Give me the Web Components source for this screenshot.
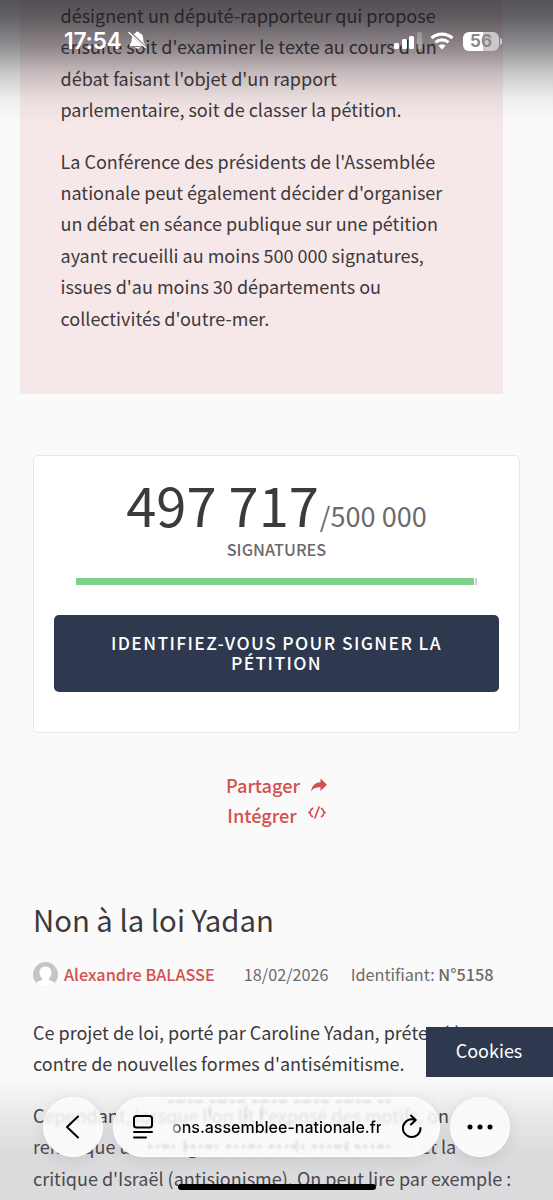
<!DOCTYPE html>
<html lang="fr">
<head>
<meta charset="utf-8">
<title>Non à la loi Yadan</title>
<style>
	html, body {
		margin: 0;
		height: 1200px;
		overflow: hidden;
	}
	body {
		position: relative;
		width: 553px;
		background: #fafafa;
		color: #3d393c;
		font: 18px/31.4px "Noto Sans CJK SC", "Noto Sans", sans-serif;
		font-kerning: normal;
	}
	p {
		margin: 0 0 20px;
		white-space: nowrap;
	}
</style>
</head>
<body>
<petition-notice>
	<p>désignent un député-rapporteur qui propose<br>ensuite soit d'examiner le texte au cours d'un<br>débat faisant l'objet d'un rapport<br>parlementaire, soit de classer la pétition.</p>
	<p>La Conférence des présidents de l'Assemblée<br>nationale peut également décider d'organiser<br>un débat en séance publique sur une pétition<br>ayant recueilli au moins 500 000 signatures,<br>issues d'au moins 30 départements ou<br>collectivités d'outre-mer.</p>
</petition-notice>

<signature-card count="497 717" goal="500 000" percent="99.3">Identifiez-vous pour signer la pétition</signature-card>

<share-links></share-links>

<petition-article author="Alexandre BALASSE" date="18/02/2026" number="N°5158">
	<span slot="title">Non à la loi Yadan</span>
	<p>Ce projet de loi, porté par Caroline Yadan, prétend lutter<br>contre de nouvelles formes d'antisémitisme.</p>
	<p>Cependant, lorsque l'on lit l'exposé des motifs, on<br>remarque un amalgame entre l'antisémitisme et la<br>critique d'Israël (antisionisme). On peut lire par exemple :</p>
</petition-article>

<cookie-button>Cookies</cookie-button>
<status-bar time="17:54" battery="56"></status-bar>
<browser-bar>ons.assemblee-nationale.fr</browser-bar>

<script>
class PetitionNotice extends HTMLElement {
	constructor() {
		super();
		this.attachShadow({mode: 'open'});
		this.shadowRoot.innerHTML = `
			<style>
				:host {
					display: block;
					box-sizing: border-box;
					width: 483px;
					height: 394px;
					margin-left: 20px;
					padding: 0 40px 40px 40.5px;
					background: #f6e8e8;
				}
			</style>
			<slot></slot>
		`;
	}
}

class SignatureCard extends HTMLElement {
	constructor() {
		super();
		this.attachShadow({mode: 'open'});
	}

	connectedCallback() {
		this.render();
	}

	render() {
		const count = this.getAttribute('count') || '0';
		const goal = this.getAttribute('goal') || '0';
		const percent = parseFloat(this.getAttribute('percent')) || 0;

		this.shadowRoot.innerHTML = `
			<style>
				:host {
					display: block;
					box-sizing: border-box;
					width: 487px;
					height: 278px;
					margin: 61px 0 0 33px;
					padding: 18px 20px 0;
					background: #fff;
					border: 1px solid #e8e8e8;
					border-radius: 5px;
					text-align: center;
				}
				.total {
					display: flex;
					justify-content: center;
					align-items: baseline;
					height: 64px;
					line-height: 60px;
					white-space: nowrap;
				}
				.count {
					font-size: 54.2px;
				}
				.goal {
					margin-left: 1px;
					font-size: 27.1px;
					color: #6d696c;
				}
				.label {
					height: 22px;
					font-size: 16.3px;
					font-weight: 500;
					line-height: 22px;
					color: #6d696c;
				}
				.progress {
					display: flex;
					gap: 1px;
					height: 7px;
					margin: 18px 22px 30px;
				}
				.done {
					width: ${percent}%;
					background: #7bd389;
				}
				.rest {
					flex: 1;
					background: #d0d0d0;
				}
				button {
					display: block;
					width: 100%;
					height: 77px;
					padding: 0 40px 2px;
					border: none;
					border-radius: 5px;
					background: #2e384f;
					color: #fff;
					font: 500 17.5px/20px "Noto Sans CJK SC", "Noto Sans", sans-serif;
					letter-spacing: 1.37px;
					text-transform: uppercase;
				}
			</style>
			<div class="total"><span class="count">${count}</span><span class="goal">/${goal}</span></div>
			<div class="label">SIGNATURES</div>
			<div class="progress"><div class="done"></div><div class="rest"></div></div>
			<button><slot></slot></button>
		`;
	}
}

class ShareLinks extends HTMLElement {
	constructor() {
		super();
		this.attachShadow({mode: 'open'});
		this.shadowRoot.innerHTML = `
			<style>
				:host {
					display: flex;
					flex-direction: column;
					align-items: center;
					margin-top: 37px;
					color: #d4504f;
					font-size: 18.2px;
					font-weight: 500;
					line-height: 30px;
				}
				a {
					display: flex;
					align-items: center;
					gap: 11px;
					height: 30px;
				}
				svg {
					display: block;
				}
				.embed {
					margin-bottom: 5px;
				}
			</style>
			<a>Partager
				<svg width="16" height="14" viewBox="0 0 16 14"><path fill="currentColor" d="M9.500 0.500v3.700C4 4.400 1 7.400 0 13.500c2-3.200 5-4.400 9.500-4.200v3.700L16 6.800z"/></svg>
			</a>
			<a>Intégrer
				<svg class="embed" width="18" height="14" viewBox="0 0 18 14" fill="none" stroke="currentColor" stroke-width="1.700"><path d="M5 2L3.200 3.500Q2.600 4.200 2.600 5Q2.600 6 1.200 6.500Q2.600 7 2.600 8.200Q2.600 9 3.200 9.600L5 11M13 2l1.800 1.500Q15.400 4.200 15.400 5Q15.400 6 16.800 6.500Q15.400 7 15.400 8.200Q15.400 9 14.800 9.600L13 11M11.300.5L6.700 12.500"/></svg>
			</a>
		`;
	}
}

class PetitionArticle extends HTMLElement {
	constructor() {
		super();
		this.attachShadow({mode: 'open'});
	}

	connectedCallback() {
		this.render();
	}

	render() {
		this.shadowRoot.innerHTML = `
			<style>
				:host {
					display: block;
					margin: 69px 0 0 33px;
				}
				h1 {
					margin: 0;
					font-size: 29.3px;
					font-weight: 400;
					line-height: 40px;
				}
				.meta {
					display: flex;
					align-items: center;
					height: 30px;
					margin: 20px 0 28px;
					font-size: 16.25px;
					line-height: 30px;
					color: #6d696c;
					white-space: nowrap;
				}
				.author {
					margin: 0 29px 0 6px;
					color: #d4504f;
					font-weight: 500;
				}
				.date {
					margin-right: 22px;
				}
				b {
					font-weight: 500;
				}
			</style>
			<h1><slot name="title"></slot></h1>
			<div class="meta">
				<svg width="25" height="25" viewBox="0 0 25 25">
					<clipPath id="round"><circle cx="12.500" cy="12.500" r="12.500"/></clipPath>
					<g clip-path="url(#round)">
						<rect width="25" height="25" fill="#c5c5c5"/>
						<path fill="#fff" d="M12.500 4.500c3.600 0 6 2.500 6 6 0 2.500-1 4.500-2.500 5.800v1.900c3 .6 5.500 1.700 6.500 3.800v4h-20v-4c1-2.100 3.500-3.200 6.500-3.800v-1.900c-1.500-1.300-2.500-3.300-2.500-5.800 0-3.500 2.400-6 6-6z"/>
					</g>
				</svg>
				<span class="author">${this.getAttribute('author')}</span>
				<span class="date">${this.getAttribute('date')}</span>
				<span>Identifiant: <b>${this.getAttribute('number')}</b></span>
			</div>
			<slot></slot>
		`;
	}
}

class CookieButton extends HTMLElement {
	constructor() {
		super();
		this.attachShadow({mode: 'open'});
		this.shadowRoot.innerHTML = `
			<style>
				:host {
					position: absolute;
					right: 0;
					top: 1027px;
					z-index: 2;
					display: flex;
					justify-content: center;
					align-items: center;
					box-sizing: border-box;
					width: 127px;
					height: 50px;
					padding: 0 1px 2px 0;
					background: #2e384f;
					color: #fff;
				}
			</style>
			<slot></slot>
		`;
	}
}

class StatusBar extends HTMLElement {
	constructor() {
		super();
		this.attachShadow({mode: 'open'});
	}

	connectedCallback() {
		this.render();
	}

	render() {
		this.shadowRoot.innerHTML = `
			<style>
				:host {
					position: absolute;
					inset: 0 0 auto;
					z-index: 3;
					display: flex;
					justify-content: space-between;
					box-sizing: border-box;
					height: 124px;
					padding: 29px 51px 0 64px;
					background: linear-gradient(rgba(28, 26, 33, .74), rgba(28, 26, 33, .68) 18px, rgba(28, 26, 33, .49) 45px, rgba(28, 26, 33, .22) 73px, rgba(28, 26, 33, .05) 100px, rgba(28, 26, 33, 0));
					color: #fff;
					font-family: Inter, sans-serif;
					line-height: 24px;
				}
				.side {
					display: flex;
					align-items: center;
					height: 24px;
				}
				.time {
					font-size: 22.8px;
					font-weight: 600;
					letter-spacing: -.25px;
					margin-right: 6px;
				}
				.bell {
					margin-bottom: 2px;
				}
				.wifi {
					margin: 0 9px 0 8px;
				}
				.battery {
					width: 36px;
					height: 19px;
					border-radius: 6px;
					background: linear-gradient(90deg, #fff 56%, #cbc7ca 56%);
					color: #8b878b;
					font-size: 17px;
					font-weight: 700;
					line-height: 19px;
					text-align: center;
				}
				.cap {
					width: 2px;
					height: 7px;
					margin-left: 1px;
					border-radius: 0 2px 2px 0;
					background: #cbc7ca;
				}
			</style>
			<div class="side">
				<span class="time">${this.getAttribute('time')}</span>
				<svg class="bell" width="19" height="20" viewBox="0 0 20 20">
					<path fill="#fff" d="M10 1c1.200 0 1.900.8 2 1.700 2.600.8 4 3 4 5.800 0 3.600.8 4.500 2 6 .7.900.3 1.700-.7 1.700H2.700c-1 0-1.400-.8-.7-1.700 1.200-1.500 2-2.400 2-6 0-2.800 1.400-5 4-5.800.1-.9.8-1.700 2-1.700zM7.500 17h5c-.3 1.300-1.200 2-2.500 2s-2.200-.7-2.500-2z"/>
					<path stroke="#7d777c" stroke-width="2.600" d="M2 2l17 16"/>
					<path stroke="#fff" stroke-width="1.400" stroke-linecap="round" d="M1 2l17.500 16"/>
				</svg>
			</div>
			<div class="side">
				<svg width="28" height="18" viewBox="0 0 28 18" fill="#fff">
					<rect y="11" width="5" height="6" rx="1.500"/>
					<rect x="8" y="7" width="5" height="10" rx="1.500"/>
					<rect x="15" y="4" width="5" height="13" rx="1.500"/>
					<rect x="23" y="0" width="5" height="17" rx="1.500" opacity=".25"/>
				</svg>
				<svg class="wifi" width="24" height="18" viewBox="0 0 24 18" fill="none" stroke="#fff" stroke-width="3.200">
					<path d="M1.500 6.200a15.300 15.300 0 0 1 21 0M5.500 10.400a9.500 9.500 0 0 1 13 0"/>
					<path fill="#fff" stroke="none" d="M12 17.500l-3.700-3.800a5.300 5.300 0 0 1 7.400 0z"/>
				</svg>
				<div class="battery">${this.getAttribute('battery')}</div>
				<div class="cap"></div>
			</div>
		`;
	}
}

class BrowserBar extends HTMLElement {
	constructor() {
		super();
		this.attachShadow({mode: 'open'});
		this.shadowRoot.innerHTML = `
			<style>
				:host {
					position: absolute;
					inset: auto 0 0;
					z-index: 1;
					display: flex;
					gap: 10px;
					box-sizing: border-box;
					height: 125px;
					padding: 22px 43px 0;
					background: linear-gradient(rgba(120, 120, 128, 0), rgba(120, 120, 128, .13) 40px, rgba(120, 120, 128, .24) 80px, rgba(120, 120, 128, .23));
					color: #000;
				}
				.glass {
					display: flex;
					justify-content: center;
					align-items: center;
					box-sizing: border-box;
					width: 60px;
					height: 60px;
					border: 1px solid #fff;
					border-radius: 30px;
					background: linear-gradient(rgba(251, 251, 252, .86) 27px, rgba(251, 251, 252, .97) 36px);
					backdrop-filter: blur(1px);
					box-shadow: 0 3px 16px rgba(0, 0, 0, .09);
				}
				.address {
					position: relative;
					justify-content: flex-start;
					width: 327px;
					padding-left: 19px;
				}
				/* page text refracted by the edges of the glass */
				.refraction {
					position: absolute;
					left: 30px;
					top: 0;
					filter: blur(.8px);
					opacity: .09;
				}
				.url {
					flex: none;
					width: 209px;
					margin: 0 21px 0 19px;
					font: 500 16px/24px Inter, sans-serif;
					white-space: nowrap;
					background: linear-gradient(90deg, rgba(0, 0, 0, .3), #000 14px);
					background-clip: text;
					color: transparent;
				}
				.home {
					position: absolute;
					left: 178px;
					bottom: 10px;
					width: 198px;
					height: 6px;
					border-radius: 3px;
					background: #000;
				}
				svg {
					flex: none;
					fill: none;
					stroke: #000;
					stroke-width: 2;
					stroke-linecap: round;
					stroke-linejoin: round;
				}
			</style>
			<div class="glass">
				<svg width="14" height="24" viewBox="0 0 14 24"><path d="M12 1.500L1 12l11 10.500"/></svg>
			</div>
			<div class="glass address">
				<svg class="refraction" width="270" height="58" viewBox="0 0 270 58">
					<path stroke-width="3" stroke-linecap="butt" stroke-dasharray="6 2 9 3 5 2 8 7" d="M24 3.500h222"/>
					<path stroke-width="4" stroke-linecap="butt" stroke-dasharray="4 4 3 3 7 3 3 8 5 3" d="M4 48.500h246"/>
					<path stroke-width="2" d="M66 9v11M102 8v12M118 8v12M41 43v11M153 43v11M203 44v9"/>
				</svg>
				<svg width="20" height="24" viewBox="0 0 20 24"><rect x="1" y="1" width="18" height="11.500" rx="2.500"/><path d="M1 17h18M1 22.500h12"/></svg>
				<span class="url"><slot></slot></span>
				<svg width="20" height="26" viewBox="0 0 20 26"><path d="M12.800 5.900A8.800 8.800 0 1 0 18.500 14M9 1.500l4.700 4.500-4.700 4.500"/></svg>
			</div>
			<div class="glass">
				<svg width="26" height="6" viewBox="0 0 26 6"><path stroke-width="5" d="M3 3h.01M13 3h.01M23 3h.01"/></svg>
			</div>
			<div class="home"></div>
		`;
	}
}

customElements.define('petition-notice', PetitionNotice);
customElements.define('signature-card', SignatureCard);
customElements.define('share-links', ShareLinks);
customElements.define('petition-article', PetitionArticle);
customElements.define('cookie-button', CookieButton);
customElements.define('status-bar', StatusBar);
customElements.define('browser-bar', BrowserBar);
</script>
</body>
</html>
